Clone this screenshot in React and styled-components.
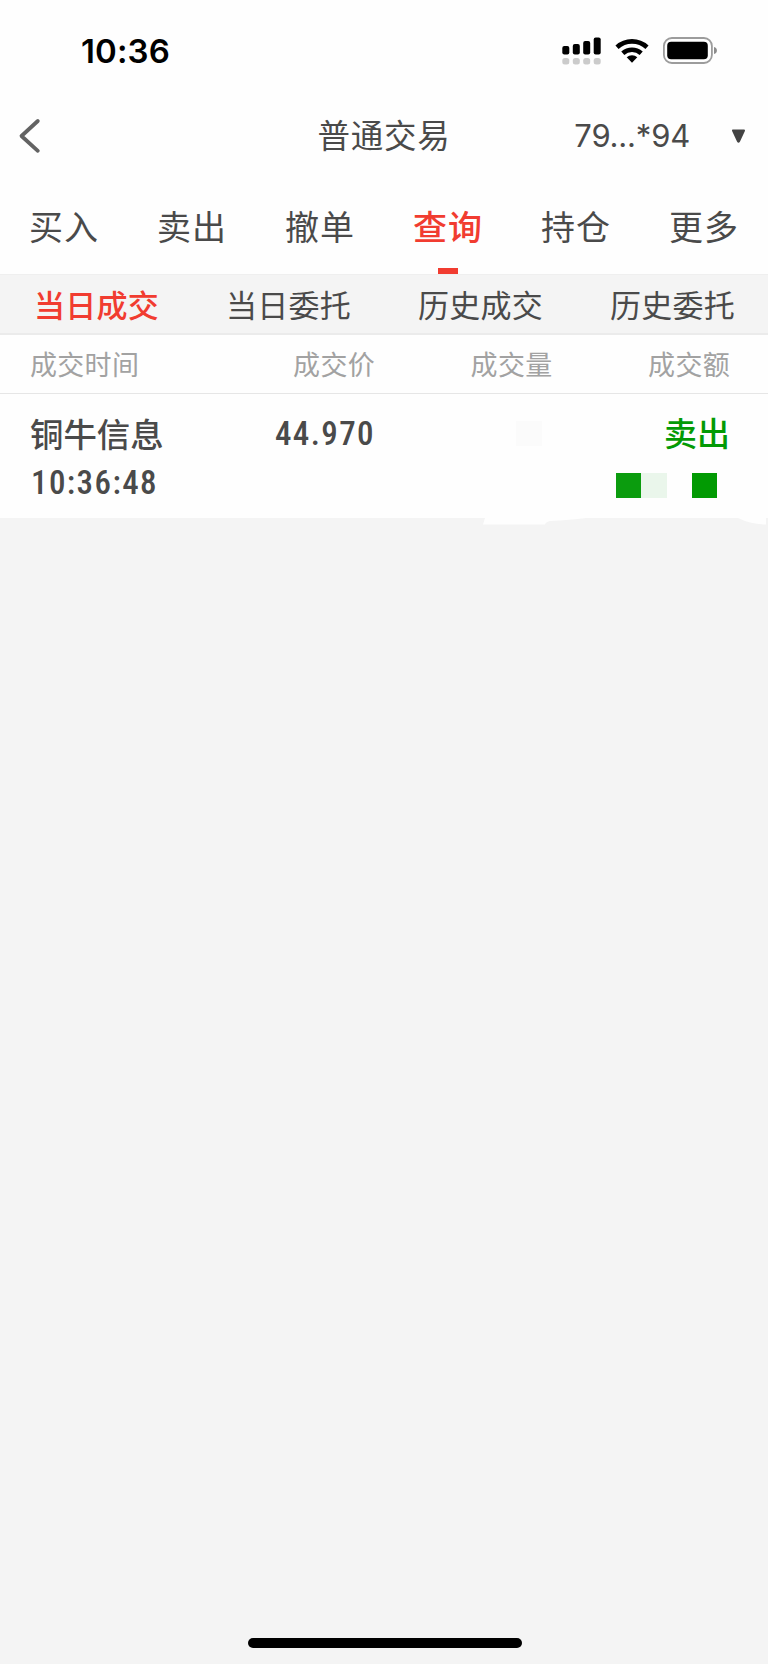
import React, { useState } from 'react';
import styled, { createGlobalStyle, css } from 'styled-components';

const GlobalStyle = createGlobalStyle`
  * {
    box-sizing: border-box;
  }

  body {
    margin: 0;
    background: #f4f4f4;
    font-family: "Noto Sans CJK SC", sans-serif;
    color: #4a4a4a;
  }
`;

const Page = styled.div`
  display: flex;
  flex-direction: column;
  width: 768px;
  height: 1664px;
  overflow: hidden;
  background: #f4f4f4;
`;

const StatusBar = styled.div`
  display: flex;
  align-items: center;
  justify-content: space-between;
  height: 102px;
  padding: 0 51px 0 81px;
  background: #fefefe;
`;

const Clock = styled.span`
  font: 600 33px/40px Inter, sans-serif;
  letter-spacing: 0.1px;
  color: #000;
`;

const StatusIcons = styled.div`
  display: flex;
  align-items: center;
  gap: 13px;

  svg {
    display: block;
  }
`;

const NavBar = styled.div`
  display: grid;
  grid-template-columns: 1fr auto 1fr;
  align-items: center;
  height: 68px;
  padding: 0 22px 0 17px;
  background: #fefefe;
`;

const BackBtn = styled.button`
  display: flex;
  padding: 0;
  border: 0;
  background: none;
`;

const Title = styled.h1`
  margin: 0;
  padding: 0 0 4px 5px;
  font-size: 32.5px;
  font-weight: 400;
  line-height: 40px;
  letter-spacing: 0.8px;
`;

const Account = styled.div`
  display: flex;
  align-items: center;
  justify-content: flex-end;
  gap: 41px;
  font: 400 31px/40px Inter, sans-serif;
  letter-spacing: -0.2px;
`;

const Tabs = styled.div`
  display: grid;
  grid-template-columns: repeat(6, 1fr);
  height: 104px;
  background: #fefefe;
`;

const activeText = css`
  font-weight: 500;
  color: #f13c30;
`;

const Tab = styled.button`
  display: flex;
  flex-direction: column;
  align-items: center;
  justify-content: space-between;
  padding: 32px 0 0;
  border: 0;
  background: none;
  font-family: inherit;
  font-size: 34px;
  line-height: 48px;
  letter-spacing: 0.9px;
  color: inherit;
  ${({ $active }) => $active && activeText}
`;

const TabMark = styled.span`
  width: 20px;
  height: 6px;
  background: ${({ $active }) => ($active ? '#f13c30' : 'transparent')};
`;

const SubTabs = styled.div`
  display: grid;
  grid-template-columns: repeat(4, 1fr);
  height: 61px;
  border-top: 1px solid #efefef;
  border-bottom: 2px solid #ebebeb;
  background: #f4f4f4;
`;

const SubTab = styled.button`
  padding: 0 0 2px 1px;
  border: 0;
  background: none;
  font-family: inherit;
  font-size: 31px;
  letter-spacing: 0.2px;
  color: inherit;
  ${({ $active }) => $active && activeText}
`;

const columns = css`
  display: grid;
  grid-template-columns: 1fr 1fr 177.5px 177.5px;
  padding: 0 38px 0 30px;
`;

const TableHead = styled.div`
  ${columns}
  align-items: center;
  height: 59px;
  border-bottom: 1px solid #e6e6e6;
  background: #fefefe;
  font-size: 27px;
  letter-spacing: 0.3px;
  color: #a2a2a2;
`;

const HeadCell = styled.span`
  padding-bottom: 1px;
  text-align: ${({ $left }) => ($left ? 'left' : 'right')};
`;

const TableRow = styled.div`
  ${columns}
  grid-template-rows: 49px 49px;
  align-items: center;
  height: 124px;
  padding-top: 15px;
  background: #fefefe;
`;

const StockName = styled.span`
  padding-bottom: 3px;
  font-size: 33.4px;
  font-weight: 500;
  white-space: nowrap;
`;

const Figure = styled.span`
  padding-left: 1px;
  font: 500 33px/40px Roboto, sans-serif;
  font-stretch: 85%;
  letter-spacing: 1.4px;
  text-align: ${({ $right }) => ($right ? 'right' : 'left')};
`;

const Side = styled.span`
  padding-bottom: 3px;
  font-size: 33px;
  font-weight: 500;
  text-align: right;
  color: #039a05;
`;

const Mosaic = styled.span`
  display: flex;
  justify-self: end;
  grid-column: ${({ $column }) => $column};
  margin-right: ${({ $inset }) => $inset};
  padding-top: ${({ $drop }) => $drop};
`;

const Pixel = styled.span`
  width: 25.2px;
  height: 25.5px;
  background: ${({ $color }) => $color};
`;

const TornEdge = styled.svg`
  display: block;
  flex: none;
`;

const HomeArea = styled.div`
  display: flex;
  justify-content: center;
  margin-top: auto;
  padding: 0 0 16px 2px;
`;

const HomeIndicator = styled.div`
  width: 274px;
  height: 10px;
  border-radius: 5px;
  background: #000;
`;

const SignalIcon = () => (
  <svg width="40" height="30" viewBox="0 0 40 30">
    <g fill="#000">
      <rect x="0.3" y="10" width="7" height="8.5" rx="2" />
      <rect x="10.8" y="8" width="7" height="10.5" rx="2" />
      <rect x="21.2" y="5" width="7" height="13.5" rx="2" />
      <rect x="31.7" y="1.5" width="7" height="17" rx="2" />
    </g>
    <g fill="#cbcbcb">
      <rect x="0.3" y="22" width="7" height="6.5" rx="2.5" />
      <rect x="10.8" y="22" width="7" height="6.5" rx="2.5" />
      <rect x="21.2" y="22" width="7" height="6.5" rx="2.5" />
      <rect x="31.7" y="22" width="7" height="6.5" rx="2.5" />
    </g>
  </svg>
);

const WifiIcon = () => (
  <svg width="34" height="26" viewBox="0 0 34 26">
    <g fill="none" stroke="#000" strokeWidth="4.6">
      <path d="M2 9.3a22 22 0 0 1 30 0" />
      <path d="M7.8 15.3a13.8 13.8 0 0 1 18.4 0" />
    </g>
    <path d="M11.7 19.3a8 8 0 0 1 10.6 0L17 24.7z" fill="#000" />
  </svg>
);

const BatteryIcon = () => (
  <svg width="55" height="28" viewBox="0 0 55 28">
    <rect x="1.9" y="1" width="48" height="25" rx="8" fill="none" stroke="#9c9c9c" strokeWidth="1.8" />
    <rect x="5.2" y="4.8" width="40.6" height="17.5" rx="4" fill="#000" />
    <path d="M52 10c2 .6 2.9 1.6 2.9 3.4s-.9 3-2.9 3.6z" fill="#8c8c8c" />
  </svg>
);

const BackIcon = () => (
  <svg width="24" height="38" viewBox="0 0 24 38">
    <path
      d="M20.8 4 4.5 19l16.3 14.8"
      fill="none"
      stroke="#636363"
      strokeWidth="3.8"
      strokeLinecap="round"
      strokeLinejoin="round"
    />
  </svg>
);

const CaretIcon = () => (
  <svg width="15" height="14" viewBox="0 0 15 14">
    <path
      d="M2 1.5h11L8 12.3q-.5.8-1 0z"
      fill="#434343"
      stroke="#434343"
      strokeWidth="2"
      strokeLinejoin="round"
    />
  </svg>
);

const tabs = ['买入', '卖出', '撤单', '查询', '持仓', '更多'];
const subTabs = ['当日成交', '当日委托', '历史成交', '历史委托'];
const headers = ['成交时间', '成交价', '成交量', '成交额'];

const App = () => {
  // state
  const [tab, setTab] = useState('查询');
  const [subTab, setSubTab] = useState('当日成交');

  // render
  return (
    <>
      <GlobalStyle />
      <Page>
        <StatusBar>
          <Clock>10:36</Clock>
          <StatusIcons>
            <SignalIcon />
            <WifiIcon />
            <BatteryIcon />
          </StatusIcons>
        </StatusBar>
        <NavBar>
          <BackBtn aria-label="返回">
            <BackIcon />
          </BackBtn>
          <Title>普通交易</Title>
          <Account>
            <span>79...*94</span>
            <CaretIcon />
          </Account>
        </NavBar>
        <Tabs>
          {
            tabs.map((name) => (
              <Tab key={name} $active={name === tab} onClick={() => setTab(name)}>
                {name}
                <TabMark $active={name === tab} />
              </Tab>
            ))
          }
        </Tabs>
        <SubTabs>
          {
            subTabs.map((name) => (
              <SubTab key={name} $active={name === subTab} onClick={() => setSubTab(name)}>
                {name}
              </SubTab>
            ))
          }
        </SubTabs>
        <TableHead>
          {
            headers.map((name, i) => (
              <HeadCell key={name} $left={i === 0}>{name}</HeadCell>
            ))
          }
        </TableHead>
        <TableRow>
          <StockName>铜牛信息</StockName>
          <Figure $right>44.970</Figure>
          <Mosaic $column="3" $inset="11px" $drop="0">
            <Pixel $color="#fbfbfb" />
          </Mosaic>
          <Side>卖出</Side>
          <Figure>10:36:48</Figure>
          <Mosaic $column="4" $inset="13px" $drop="6px">
            <Pixel $color="#0b9c0e" />
            <Pixel $color="#eaf6eb" />
            <Pixel $color="transparent" />
            <Pixel $color="#029a03" />
          </Mosaic>
        </TableRow>
        <TornEdge width="768" height="8" viewBox="0 0 768 8">
          <path d="M485 0h253q12 6 28 6.5V0H485l-2 6.5h62q1-3 5-3.5 20-1 36-3z" fill="#fefefe" />
        </TornEdge>
        <HomeArea>
          <HomeIndicator />
        </HomeArea>
      </Page>
    </>
  );
};

export default App;
